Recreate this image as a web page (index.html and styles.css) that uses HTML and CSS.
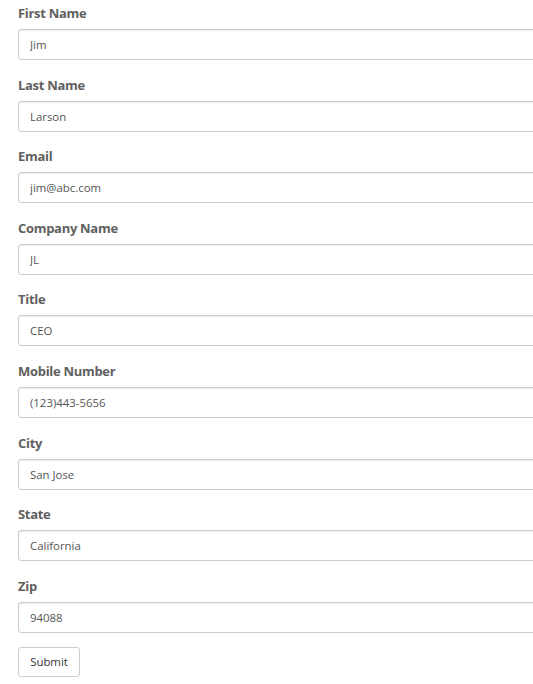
FILE: index.html
```html
<!DOCTYPE html>
<html>
<head>
<meta charset="utf-8">
<link rel="stylesheet" href="styles.css">
</head>
<body>
<form class="form">
  <div class="group"><label class="label">First Name</label><input class="field" type="text" value="Jim"></div>
  <div class="group"><label class="label">Last Name</label><input class="field" type="text" value="Larson"></div>
  <div class="group"><label class="label">Email</label><input class="field" type="text" value="jim@abc.com"></div>
  <div class="group"><label class="label">Company Name</label><input class="field" type="text" value="JL"></div>
  <div class="group"><label class="label">Title</label><input class="field" type="text" value="CEO"></div>
  <div class="group"><label class="label">Mobile Number</label><input class="field" type="text" value="(123)443-5656"></div>
  <div class="group"><label class="label">City</label><input class="field" type="text" value="San Jose"></div>
  <div class="group"><label class="label">State</label><input class="field" type="text" value="California"></div>
  <div class="group"><label class="label">Zip</label><input class="field" type="text" value="94088"></div>
  <button class="submit" type="button">Submit</button>
</form>
</body>
</html>
```
FILE: styles.css
```css
html, body {
  margin: 0;
  padding: 0;
  background: #fff;
  overflow: hidden;
}
.form {
  padding: 0 0 0 18px;
  display: flex;
  flex-direction: column;
  align-items: flex-start;
}
.group {
  display: flex;
  flex-direction: column;
  margin-bottom: 11.6px;
}
.label {
  display: block;
  font-family: "Open Sans", sans-serif;
  font-weight: 700;
  font-size: 13px;
  line-height: 20px;
  color: #606060;
  margin-top: 3px;
  margin-bottom: 6px;
  letter-spacing: -0.3px;
}
.field {
  box-sizing: border-box;
  width: 540px;
  height: 31px;
  margin: 0;
  padding: 0 11px;
  border: 1px solid #cccccc;
  border-radius: 3px;
  box-shadow: inset 0 1px 1px rgba(0,0,0,0.08);
  font-family: "Open Sans", sans-serif;
  font-size: 11.4px;
  color: #555;
  background: #fff;
  outline: none;
}
.submit {
  box-sizing: border-box;
  margin-top: 2.4px;
  width: 62px;
  height: 30px;
  padding: 0;
  border: 1px solid #cccccc;
  border-radius: 3px;
  background: #fff;
  font-family: "Open Sans", sans-serif;
  font-size: 11.4px;
  color: #333;
}
```
